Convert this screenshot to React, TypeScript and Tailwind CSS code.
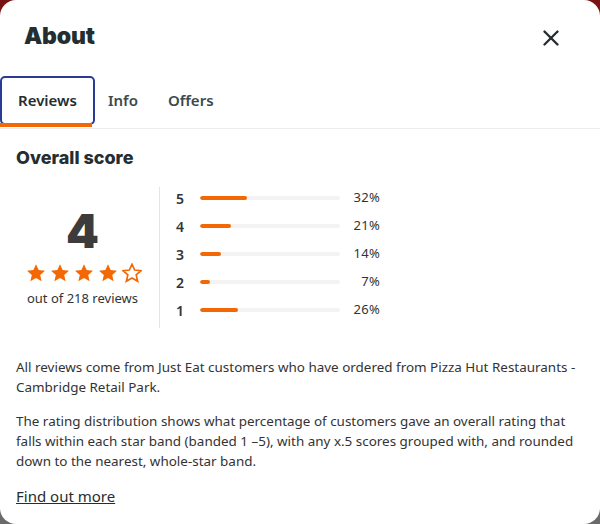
import { X } from 'lucide-react';

const bands = [
  { star: 5, pct: 32 },
  { star: 4, pct: 21 },
  { star: 3, pct: 14 },
  { star: 2, pct: 7 },
  { star: 1, pct: 26 },
];

function Star({ filled }: { filled: boolean }) {
  return (
    <svg width="20" height="20" viewBox="0 0 24 24" className="shrink-0">
      <path
        d="M12 1.5l3.2 7 7.6.7-5.8 5.1 1.8 7.6L12 18l-6.8 3.9 1.8-7.6-5.8-5.1 7.6-.7z"
        fill={filled ? '#f36805' : '#fff'}
        stroke="#f36805"
        strokeWidth={filled ? 0 : 2}
        strokeLinejoin="miter"
      />
    </svg>
  );
}

export default function App() {
  return (
    <div className="w-[600px] h-[524px] bg-[linear-gradient(#7a1212,#6b6b6b)]">
      <div
        className="w-full h-full bg-white rounded-[16px] overflow-hidden flex flex-col text-[#333]"
        style={{ fontFamily: '"Noto Sans", "Open Sans", sans-serif' }}
      >
        {/* Header */}
        <div className="flex items-center justify-between pl-6 pr-[36px] pt-[22px] h-[76px] pb-[2px]">
          <h1
            className="text-[23px] font-black text-[#242e30] leading-none tracking-[-0.2px] mt-[-24px]"
            style={{ fontFamily: 'Inter, sans-serif' }}
          >
            About
          </h1>
          <button className="text-[#242e30] mt-[-20px]">
            <X className="w-[26px] h-[26px]" strokeWidth={2.2} />
          </button>
        </div>

        {/* Tabs */}
        <div className="flex border-b border-[#ececec] h-[53px]">
          <div className="relative w-[95px] h-[49px]">
            <div className="absolute inset-0 border-2 border-[#2a3b96] rounded-[5px] flex items-center justify-center text-[15px] font-semibold text-[#242e30]">
              Reviews
            </div>
            <div className="absolute left-0 top-[47px] w-[92px] h-[4px] bg-[#f36805]" />
          </div>
          <div className="h-[49px] flex items-center pl-[13px] pr-[30px] text-[15px] font-semibold text-[#3b4a4c]">Info</div>
          <div className="h-[49px] flex items-center text-[15px] font-semibold text-[#3b4a4c]">Offers</div>
        </div>

        {/* Overall score */}
        <div className="px-4 pt-[17px]">
          <h2
            className="text-[18px] font-extrabold text-[#242e30] leading-6"
            style={{ fontFamily: 'Inter, sans-serif' }}
          >
            Overall score
          </h2>

          <div className="flex mt-[17px]">
            <div className="w-[144px] h-[141px] flex flex-col items-center justify-center border-r border-[#e4e4e4] pt-[2px] pr-[10px]">
              <div
                className="text-[47px] font-black leading-none text-[#3c3c3c] h-[44px] flex items-center"
                style={{ fontFamily: 'Inter, sans-serif' }}
              >
                4
              </div>
              <div className="flex gap-[4px] mt-[10px] pl-[2px]">
                {[1, 2, 3, 4, 5].map((i) => (
                  <Star key={i} filled={i <= 4} />
                ))}
              </div>
              <div className="text-[13px] mt-[6px] text-[#333]">out of 218 reviews</div>
            </div>

            <div className="flex flex-col pl-[16px] gap-[6px]">
              {bands.map((b) => (
                <div key={b.star} className="flex items-center h-[22px]">
                  <span className="w-[24px] text-[14px] font-semibold text-[#333]">{b.star}</span>
                  <div className="w-[140px] h-[4px] rounded-full bg-[#f5f3f1] overflow-hidden">
                    <div className="h-full rounded-full bg-[#f36805]" style={{ width: `${b.pct * 1.05}%` }} />
                  </div>
                  <span className="w-[40px] text-right text-[13px] text-[#333] tracking-[0.3px]">{b.pct}%</span>
                </div>
              ))}
            </div>
          </div>

          <p className="text-[13.45px] leading-5 mt-[29px]">
            All reviews come from Just Eat customers who have ordered from Pizza Hut Restaurants - Cambridge Retail Park.
          </p>
          <p className="text-[13.45px] leading-5 mt-[14px]">
            The rating distribution shows what percentage of customers gave an overall rating that falls within each star band (banded 1 –5), with any x.5 scores grouped with, and rounded down to the nearest, whole-star band.
          </p>
          <a href="#" className="inline-block mt-[14px] text-[15px] underline text-[#242e30]">
            Find out more
          </a>
        </div>
      </div>
    </div>
  );
}
